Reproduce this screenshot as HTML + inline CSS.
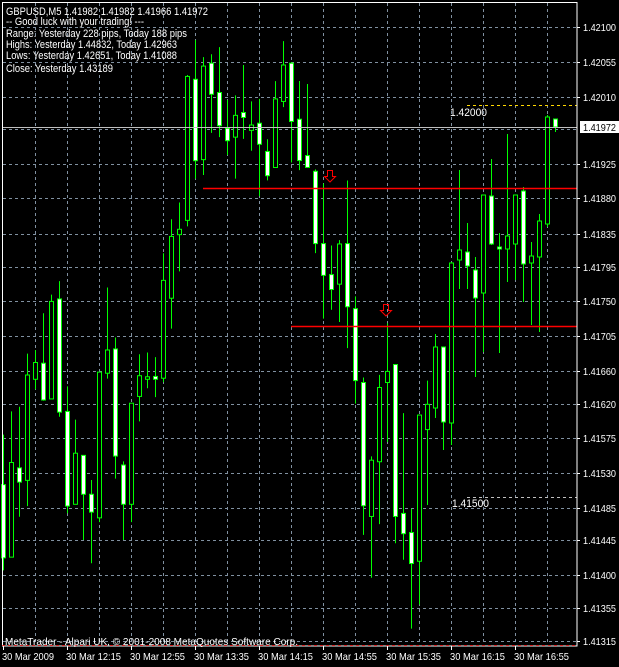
<!DOCTYPE html>
<html><head><meta charset="utf-8"><style>
html,body{margin:0;padding:0;background:#000;width:619px;height:667px;overflow:hidden}
svg{display:block}
text{font-family:"Liberation Sans",sans-serif;fill:#fff}
</style></head><body>
<svg id="s" width="619" height="667" xmlns="http://www.w3.org/2000/svg">
<rect width="619" height="667" fill="#000"/>
<g id="grid" stroke="#8090a0" stroke-width="1" stroke-dasharray="3,3"></g>
<g id="candles"></g>
<line x1="2" y1="127.5" x2="577" y2="127.5" stroke="#c0c0c0"/>
<line x1="203" y1="188.5" x2="577" y2="188.5" stroke="#ff0000" stroke-width="1.5"/>
<line x1="291" y1="326.5" x2="577" y2="326.5" stroke="#ff0000" stroke-width="1.5"/>
<line x1="467" y1="105.5" x2="577" y2="105.5" stroke="#ffd700" stroke-dasharray="3,3"/>
<line x1="467" y1="497.5" x2="577" y2="497.5" stroke="#c0c0c0" stroke-dasharray="3,3"/>
<path d="M327.5 170.5 h5 v6 h3 l-5.5 5.5 l-5.5 -5.5 h3 z" fill="none" stroke="#ff0000"/>
<path d="M383.5 304.5 h5 v6 h3 l-5.5 5.5 l-5.5 -5.5 h3 z" fill="none" stroke="#ff0000"/>
<rect x="2.5" y="2.5" width="574.5" height="643.5" fill="none" stroke="#fff"/>
<line x1="2" y1="645.5" x2="577" y2="645.5" stroke="#ff0000" stroke-dasharray="3,3" opacity="0.7"/>
<g font-size="11" lengthAdjust="spacingAndGlyphs">
<text x="6" y="15" textLength="202" lengthAdjust="spacingAndGlyphs">GBPUSD,M5  1.41982 1.41982 1.41966 1.41972</text>
<text x="6" y="25" textLength="138" lengthAdjust="spacingAndGlyphs">-- Good luck with your trading! ---</text>
<text x="6" y="37" textLength="181" lengthAdjust="spacingAndGlyphs">Range: Yesterday 228 pips, Today 188 pips</text>
<text x="6" y="48" textLength="171" lengthAdjust="spacingAndGlyphs">Highs: Yesterday 1.44832, Today 1.42963</text>
<text x="6" y="59" textLength="171" lengthAdjust="spacingAndGlyphs">Lows:  Yesterday 1.42651, Today 1.41088</text>
<text x="6" y="72" textLength="107" lengthAdjust="spacingAndGlyphs">Close: Yesterday 1.43189</text>
<text x="450" y="116" textLength="37" lengthAdjust="spacingAndGlyphs">1.42000</text>
<text x="452" y="507" textLength="37" lengthAdjust="spacingAndGlyphs">1.41500</text>
<text x="5" y="645" font-size="10.5" textLength="293" lengthAdjust="spacingAndGlyphs">MetaTrader - Alpari UK, © 2001-2008 MetaQuotes Software Corp.</text>
</g>
<rect x="580" y="121" width="39" height="12" fill="#fff"/>
<g id="axis" font-size="10.5"></g>
</svg>
<script>
var ns="http://www.w3.org/2000/svg";
function el(p,t,a,txt){var e=document.createElementNS(ns,t);for(var k in a)e.setAttribute(k,a[k]);if(txt!==undefined)e.textContent=txt;p.appendChild(e);return e;}
var grid=document.getElementById('grid'),ax=document.getElementById('axis'),cg=document.getElementById('candles');
for(var x=35;x<577;x+=32)el(grid,'line',{x1:x+.5,y1:3,x2:x+.5,y2:645});
var gy=[27,62,97,129,164,198,234,267,301,336,371,404,438,473,508,540,575,608,641];
gy.forEach(function(y){el(grid,'line',{x1:3,y1:y+.5,x2:576,y2:y+.5});});
var labs=[[27,"1.42100"],[62,"1.42055"],[97,"1.42010"],[164,"1.41925"],[198,"1.41880"],[234,"1.41835"],[267,"1.41795"],[301,"1.41750"],[336,"1.41705"],[371,"1.41660"],[404,"1.41620"],[438,"1.41575"],[473,"1.41530"],[508,"1.41485"],[540,"1.41445"],[575,"1.41400"],[608,"1.41355"],[641,"1.41315"]];
labs.forEach(function(l){el(ax,'line',{x1:577,y1:l[0]+.5,x2:580,y2:l[0]+.5,stroke:'#fff'});el(ax,'text',{x:583,y:l[0]+4,textLength:33,lengthAdjust:'spacingAndGlyphs'},l[1]);});
el(ax,'text',{x:583,y:131,style:'fill:#000',textLength:33,lengthAdjust:'spacingAndGlyphs'},"1.41972");
var times=["30 Mar 2009","30 Mar 12:15","30 Mar 12:55","30 Mar 13:35","30 Mar 14:15","30 Mar 14:55","30 Mar 15:35","30 Mar 16:15","30 Mar 16:55"];
times.forEach(function(t,i){var x=3+64*i;el(ax,'line',{x1:x+.5,y1:646,x2:x+.5,y2:650,stroke:'#fff'});el(ax,'text',{x:x-1,y:660,textLength:(i==0?52:55),lengthAdjust:'spacingAndGlyphs'},t);});
function g(a,s,o){return a.map(function(c){return [o+c[0]/s,o+c[1]/s,o+c[2]/s,o+c[3]/s,c[4]];});}
var A=g([[1105,1245,1450,1485,1],[1040,1183,1448,1448,0],[1027,1198,1238,1335,1],[878,938,1233,1305,0],[868,903,950,978,0],[765,905,1008,1010,1],[713,732,1005,1005,0],[675,725,1042,1055,1],[970,1040,1305,1325,1],[1063,1157,1300,1300,0],[1163,1163,1272,1400,1],[1232,1272,1322,1465,1],[930,930,1338,1350,0],[693,868,933,948,0],[833,865,1165,1228,1],[1180,1190,1300,1400,1],[1017,1017,1300,1350,0],[880,940,998,1068,0],[875,943,950,975,0],
[888,942,950,1000,1],[597,673,947,958,0],[502,550,723,808,0],[455,530,545,648,0],[98,102,505,522,0],[0,110,338,388,1],[48,73,335,378,0],[40,65,152,260,1],[20,147,240,272,1],[168,247,282,322,1],[155,211,272,388,0],[70,203,217,277,1],[172,238,253,310,0],[165,233,292,437,1],[278,312,380,393,1],[115,165,357,357,0],[3,70,172,188,0],[62,65,228,343,1]],2.8,40);
var B=g([[107,207,315,340,1],[115,302,333,333,1],[338,343,532,557,1],[375,532,615,728,1],[537,613,652,705,1],[523,533,638,737,0],[367,532,697,805,1],[670,702,890,950,1],[882,895,1217,1293,1],[1088,1098,1245,1405,0],[875,908,1102,1265,0],[740,866,895,1050,0],[848,848,1245,1315,1],[975,1237,1290,1358,1],[1225,1287,1368,1538,1],[980,980,1362,1475,0],[890,952,1018,1215,0]],2.613,40);
var C=[[334,347,408,418,0],[347,347,422,450,1],[262,263,423,445,0],[170,250,260,289,0],[223,252,266,289,1],[257,270,298,377,1],[195,195,293,352,0],[159,196,244,245,1],[233,247,249,353,1],[134,236,249,282,0],[195,195,244,280,0],[187,191,264,302,1],[242,256,263,325,0],[214,221,257,332,0],[115,117,224,227,0],[119,119,127,132,1]];
var all=A.concat(B,C);
all.forEach(function(c,k){var x=3+8*k;
el(cg,'line',{x1:x+.5,y1:c[0],x2:x+.5,y2:c[3],stroke:'#00ff00'});
var h=Math.max(1,c[2]-c[1]);
el(cg,'rect',{x:x-1.5,y:c[1],width:4,height:h,fill:c[4]?'#fff':'#000',stroke:'#00ff00','stroke-width':1});});
</script>
</body></html>
